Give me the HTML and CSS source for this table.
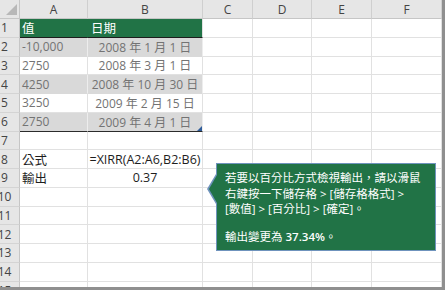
FILE: index.html
```html
<!DOCTYPE html>
<html lang="zh-Hant">
<head>
<meta charset="utf-8">
<link rel="stylesheet" href="styles.css">
</head>
<body>
<div class="frame">
  <div class="sheet">
    <div class="corner"><span class="tri"></span></div>
    <div class="ch">A</div><div class="ch">B</div><div class="ch">C</div><div class="ch">D</div><div class="ch">E</div><div class="ch">F</div>

    <div class="rh">1</div><div class="c th">值</div><div class="c th">日期</div><div class="c"></div><div class="c"></div><div class="c"></div><div class="c"></div>
    <div class="rh">2</div><div class="c band dat">-10,000</div><div class="c band dat ctr">2008 年 1 月 1 日</div><div class="c"></div><div class="c"></div><div class="c"></div><div class="c"></div>
    <div class="rh">3</div><div class="c dat">2750</div><div class="c dat ctr">2008 年 3 月 1 日</div><div class="c"></div><div class="c"></div><div class="c"></div><div class="c"></div>
    <div class="rh">4</div><div class="c band dat">4250</div><div class="c band dat ctr">2008 年 10 月 30 日</div><div class="c"></div><div class="c"></div><div class="c"></div><div class="c"></div>
    <div class="rh">5</div><div class="c dat">3250</div><div class="c dat ctr">2009 年 2 月 15 日</div><div class="c"></div><div class="c"></div><div class="c"></div><div class="c"></div>
    <div class="rh">6</div><div class="c band dat last">2750</div><div class="c band dat ctr last corner-mark">2009 年 4 月 1 日<span class="mark"></span></div><div class="c"></div><div class="c"></div><div class="c"></div><div class="c"></div>
    <div class="rh">7</div><div class="c"></div><div class="c"></div><div class="c"></div><div class="c"></div><div class="c"></div><div class="c"></div>
    <div class="rh">8</div><div class="c lbl">公式</div><div class="c lbl ctr">=XIRR(A2:A6,B2:B6)</div><div class="c"></div><div class="c"></div><div class="c"></div><div class="c"></div>
    <div class="rh">9</div><div class="c lbl">輸出</div><div class="c lbl ctr">0.37</div><div class="c"></div><div class="c"></div><div class="c"></div><div class="c"></div>
    <div class="rh">10</div><div class="c"></div><div class="c"></div><div class="c"></div><div class="c"></div><div class="c"></div><div class="c"></div>
    <div class="rh">11</div><div class="c"></div><div class="c"></div><div class="c"></div><div class="c"></div><div class="c"></div><div class="c"></div>
    <div class="rh">12</div><div class="c"></div><div class="c"></div><div class="c"></div><div class="c"></div><div class="c"></div><div class="c"></div>
    <div class="rh">13</div><div class="c"></div><div class="c"></div><div class="c"></div><div class="c"></div><div class="c"></div><div class="c"></div>
    <div class="rh">14</div><div class="c"></div><div class="c"></div><div class="c"></div><div class="c"></div><div class="c"></div><div class="c"></div>
    <div class="rh">15</div><div class="c"></div><div class="c"></div><div class="c"></div><div class="c"></div><div class="c"></div><div class="c"></div>

    <div class="callout">
      <p>若要以百分比方式檢視輸出，請以滑鼠<br>右鍵按一下儲存格 &gt; [儲存格格式] &gt;<br>[數值] &gt; [百分比] &gt; [確定]。</p>
      <p class="gap">輸出變更為 <b>37.34%</b>。</p>
    </div>
  </div>
</div>
</body>
</html>
```

FILE: styles.css
```css
html, body {
  margin: 0;
  padding: 0;
  background: #8f8f8f;
  width: 445px;
  height: 290px;
  overflow: hidden;
}

.frame {
  width: 442px;
  height: 287px;
  overflow: hidden;
  background: #ffffff;
}

.sheet {
  position: relative;
  display: grid;
  grid-template-columns: 20px 68px 115px 50px 59px 60px 70px;
  grid-template-rows: 19px repeat(15, 18.75px);
  font-family: "Open Sans", "Noto Sans CJK TC", sans-serif;
  font-size: 12px;
  color: #222;
}

.corner {
  position: relative;
  background: #e6e6e6;
  border-right: 1px solid #c6c6c6;
  border-bottom: 1px solid #c6c6c6;
  box-sizing: border-box;
}
.corner .tri {
  position: absolute;
  right: 2px;
  bottom: 3px;
  width: 0;
  height: 0;
  border-left: 11px solid transparent;
  border-bottom: 11px solid #b8b8b8;
}

.ch {
  background: #e6e6e6;
  border-right: 1px solid #cfcfcf;
  border-bottom: 1px solid #c6c6c6;
  box-sizing: border-box;
  display: flex;
  align-items: center;
  justify-content: center;
  color: #444;
  font-size: 12px;
}

.rh {
  background: #e6e6e6;
  border-right: 1px solid #c6c6c6;
  border-bottom: 1px solid #d4d4d4;
  box-sizing: border-box;
  display: flex;
  align-items: center;
  justify-content: center;
  padding-right: 10px;
  color: #444;
  font-size: 12px;
  white-space: nowrap;
}

.c {
  border-right: 1px solid #e1e1e1;
  border-bottom: 1px solid #e1e1e1;
  box-sizing: border-box;
  display: flex;
  align-items: center;
  padding-left: 2px;
  white-space: nowrap;
  overflow: visible;
}

.ctr {
  justify-content: center;
  padding-left: 0;
}

.th {
  background: #217346;
  color: #ffffff;
  border-right-color: #217346;
  border-bottom: 1px solid #1d1d1d;
  font-size: 12.5px;
}
.th + .th {
  padding-left: 3px;
  border-right-color: #e1e1e1;
}

.dat {
  color: #737373;
}

.band {
  background: #d9d9d9;
  border-right-color: #ededed;
  border-bottom-color: #d9d9d9;
}

.last {
  border-bottom: 1px solid #2b2b2b;
}

.corner-mark {
  position: relative;
}
.mark {
  position: absolute;
  right: 0;
  bottom: 0;
  width: 0;
  height: 0;
  border-left: 5px solid transparent;
  border-bottom: 5px solid #2e5c9a;
}

.lbl {
  color: #1e1e1e;
  font-size: 12.5px;
}

.callout {
  position: absolute;
  left: 216px;
  top: 163px;
  width: 220px;
  height: 88px;
  box-sizing: border-box;
  background: #217346;
  border: 1px solid #6f93bd;
  padding: 6px 6px 0 8px;
  color: #ffffff;
  font-size: 11.5px;
  line-height: 15.5px;
  white-space: nowrap;
  font-family: "Open Sans", "Noto Sans CJK TC", sans-serif;
}
.callout::before {
  content: "";
  position: absolute;
  left: -10px;
  top: 10px;
  width: 0;
  height: 0;
  border-top: 15px solid transparent;
  border-bottom: 15px solid transparent;
  border-right: 9px solid #6f93bd;
}
.callout::after {
  content: "";
  position: absolute;
  left: -8px;
  top: 11px;
  width: 0;
  height: 0;
  border-top: 14px solid transparent;
  border-bottom: 14px solid transparent;
  border-right: 8px solid #217346;
}
.callout p {
  margin: 0;
}
.callout p.gap {
  margin-top: 12px;
}
.callout b {
  font-weight: 600;
}
```
